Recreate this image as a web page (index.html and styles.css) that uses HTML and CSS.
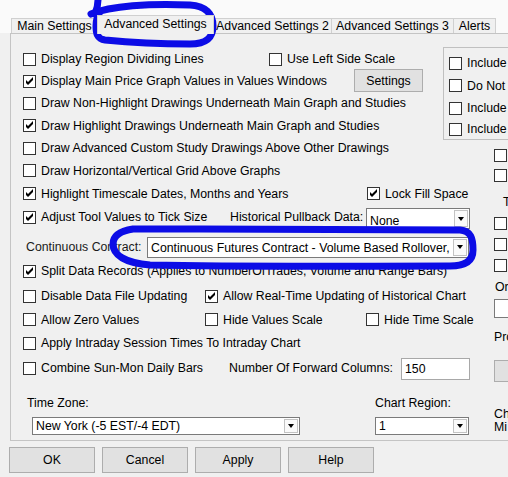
FILE: index.html
```html
<!DOCTYPE html>
<html lang="en">
<head>
    <meta charset="UTF-8">
    <title>Chart Settings</title>
    <link rel="stylesheet" href="styles.css">
</head>
<body>
    <div class="tabs">
        <div class="tab t-main">Main Settings</div>
        <div class="tab t-adv active">Advanced Settings</div>
        <div class="tab t-adv2">Advanced Settings 2</div>
        <div class="tab t-adv3">Advanced Settings 3</div>
        <div class="tab t-alerts">Alerts</div>
    </div>

    <div class="panel">
        <div class="left">
            <div class="top">
                <div class="top-rows">
                    <div class="row h22">
                        <label class="check lead-scale"><span class="box"></span>Display Region Dividing Lines</label>
                        <label class="check"><span class="box"></span>Use Left Side Scale</label>
                    </div>
                    <div class="row h22">
                        <label class="check lead-settings"><span class="box on"><svg viewBox="0 0 11 11"><polygon points="2,4 4,6 9,1 9,4 4,9 2,7"/></svg></span>Display Main Price Graph Values in Values Windows</label>
                        <button class="btn btn-settings">Settings</button>
                    </div>
                    <div class="row h22">
                        <label class="check"><span class="box"></span>Draw Non-Highlight Drawings Underneath Main Graph and Studies</label>
                    </div>
                    <div class="row h23">
                        <label class="check"><span class="box on"><svg viewBox="0 0 11 11"><polygon points="2,4 4,6 9,1 9,4 4,9 2,7"/></svg></span>Draw Highlight Drawings Underneath Main Graph and Studies</label>
                    </div>
                </div>
                <div class="group">
                    <label class="check g-row h22"><span class="box"></span>Include</label>
                    <label class="check g-row h23"><span class="box"></span>Do Not</label>
                    <label class="check g-row h22"><span class="box"></span>Include</label>
                    <label class="check g-row h20"><span class="box"></span>Include</label>
                </div>
            </div>

            <div class="row h22">
                <label class="check"><span class="box"></span>Draw Advanced Custom Study Drawings Above Other Drawings</label>
            </div>
            <div class="row h23">
                <label class="check"><span class="box"></span>Draw Horizontal/Vertical Grid Above Graphs</label>
            </div>
            <div class="row h23">
                <label class="check lead-lock"><span class="box on"><svg viewBox="0 0 11 11"><polygon points="2,4 4,6 9,1 9,4 4,9 2,7"/></svg></span>Highlight Timescale Dates, Months and Years</label>
                <label class="check"><span class="box on"><svg viewBox="0 0 11 11"><polygon points="2,4 4,6 9,1 9,4 4,9 2,7"/></svg></span>Lock Fill Space</label>
            </div>
            <div class="row h24">
                <label class="check lead-hist"><span class="box on"><svg viewBox="0 0 11 11"><polygon points="2,4 4,6 9,1 9,4 4,9 2,7"/></svg></span>Adjust Tool Values to Tick Size</label>
                <span class="label label-hist">Historical Pullback Data:</span>
                <div class="combo combo-hist"><span class="val">None</span><span class="arrow"></span></div>
            </div>
            <div class="row h24 gap-contract">
                <span class="label label-contract">Continuous Contract:</span>
                <div class="combo combo-contract"><span class="val">Continuous Futures Contract - Volume Based Rollover, Back Adjusted</span><span class="arrow"></span></div>
            </div>
            <div class="row h24">
                <label class="check"><span class="box on"><svg viewBox="0 0 11 11"><polygon points="2,4 4,6 9,1 9,4 4,9 2,7"/></svg></span>Split Data Records (Applies to NumberOfTrades, Volume and Range Bars)</label>
            </div>
            <div class="row h26">
                <label class="check lead-mid"><span class="box"></span>Disable Data File Updating</label>
                <label class="check"><span class="box on"><svg viewBox="0 0 11 11"><polygon points="2,4 4,6 9,1 9,4 4,9 2,7"/></svg></span>Allow Real-Time Updating of Historical Chart</label>
            </div>
            <div class="row h21">
                <label class="check lead-mid"><span class="box"></span>Allow Zero Values</label>
                <label class="check lead-values"><span class="box"></span>Hide Values Scale</label>
                <label class="check"><span class="box"></span>Hide Time Scale</label>
            </div>
            <div class="row h26">
                <label class="check"><span class="box"></span>Apply Intraday Session Times To Intraday Chart</label>
            </div>
            <div class="row h24">
                <label class="check lead-cols"><span class="box"></span>Combine Sun-Mon Daily Bars</label>
                <span class="label label-cols">Number Of Forward Columns:</span>
                <input class="edit edit-cols" type="text" value="150">
            </div>
            <div class="row h22 gap-zone">
                <span class="label label-zone">Time Zone:</span>
                <span class="label">Chart Region:</span>
            </div>
            <div class="row h18 gap-zone-combo">
                <div class="combo combo-zone"><span class="val">New York (-5 EST/-4 EDT)</span><span class="arrow"></span></div>
                <div class="combo combo-region"><span class="val">1</span><span class="arrow"></span></div>
            </div>
        </div>

        <div class="right">
            <div class="r-item r-first"><span class="box"></span></div>
            <div class="r-item"><span class="box"></span></div>
            <div class="r-item r-title">T</div>
            <div class="r-item r-near"><span class="box"></span></div>
            <div class="r-item r-near"><span class="box"></span></div>
            <div class="r-item r-near"><span class="box"></span></div>
            <div class="r-item r-or">Or</div>
            <div class="r-edit"></div>
            <div class="r-item r-pro">Pro</div>
            <div class="r-btn"></div>
            <div class="r-lines">Ch<br>Mi</div>
        </div>
    </div>

    <div class="buttons">
        <button class="btn btn-dlg">OK</button>
        <button class="btn btn-dlg">Cancel</button>
        <button class="btn btn-dlg">Apply</button>
        <button class="btn btn-dlg">Help</button>
    </div>

    <!-- pen marks drawn over the dialog -->
    <svg class="marks" width="508" height="477" viewBox="0 0 508 477">
        <g fill="none" stroke="#0c0ce6" stroke-width="7" stroke-linecap="round" stroke-linejoin="round">
            <path d="M98,0 C98,5 97,9 95,14"/>
            <path d="M91,14 C110,6 150,3 190,5 C206,6 213,14 213,26 C213,38 206,44 190,44 C160,44 125,42 105,40 C97,39 96,33 96,26 C96,20 97,16 100,12"/>
            <path d="M133,229 C120,231 113,236 113,244 C113,255 125,263 150,265 C250,267 350,266 450,266 C466,266 473,260 473,250 C473,238 471,231 460,230 C400,229 300,229 200,229 C170,229 150,229 133,229"/>
        </g>
    </svg>
</body>
</html>
```

FILE: styles.css
```css
body {
    margin: 0;
    width: 508px;
    height: 477px;
    overflow: hidden;
    position: relative;
    background: #f0f0f0;
    font-family: "Liberation Sans", Arial, sans-serif;
    font-size: 12.3px;
    color: #000;
}

/* tab strip */
.tabs {
    display: flex;
    align-items: flex-end;
    height: 33px;
    padding-left: 11px;
    background: #fafafa;
}
.tab {
    box-sizing: border-box;
    height: 15px;
    border: 1px solid #d0d0d0;
    border-bottom: none;
    background: #f0f0f0;
    text-align: center;
    line-height: 15px;
    white-space: nowrap;
    margin-left: -1px;
}
.t-main { width: 87px; margin-left: 0; }
.t-adv { width: 117px; }
.t-adv2 { width: 119px; }
.t-adv3 { width: 123px; }
.t-alerts { width: 43px; }
.tab.active {
    height: 19px;
    line-height: 16px;
    margin-bottom: -1px;
    position: relative;
    z-index: 1;
}

/* tab page */
.panel {
    box-sizing: border-box;
    display: flex;
    width: 560px;
    height: 408px;
    margin-left: 10px;
    padding: 14px 0 0 12px;
    border: 1px solid #c4c4c4;
    border-right: none;
}
.left { width: 455px; flex: none; }
.top { display: flex; }
.top-rows { width: 420px; flex: none; }

.row { display: flex; align-items: center; white-space: nowrap; }
.h18 { height: 18px; }
.h20 { height: 20px; }
.h21 { height: 21px; }
.h22 { height: 22px; }
.h23 { height: 23px; }
.h24 { height: 24px; }
.h26 { height: 26px; }
.gap-contract { margin-top: 6px; }
.gap-zone { margin-top: 12px; }
.gap-zone-combo { margin-top: 3px; }

.check { display: flex; align-items: center; white-space: nowrap; }
.box {
    box-sizing: border-box;
    width: 13px;
    height: 13px;
    flex: none;
    margin-right: 5px;
    border: 1px solid #333;
    background: #fff;
}
.box svg { display: block; width: 11px; height: 11px; }
.box polygon { fill: #000; }

.lead-scale { width: 246px; flex: none; }
.lead-settings { width: 331px; flex: none; }
.lead-lock { width: 344px; flex: none; }
.lead-hist { width: 207px; flex: none; }
.lead-mid { width: 182px; flex: none; }
.lead-values { width: 161px; flex: none; }
.lead-cols { width: 206px; flex: none; }

.label { white-space: nowrap; }
.label-hist { width: 136px; flex: none; }
.label-contract { width: 121px; flex: none; padding-left: 3px; color: #1a1a1a; }
.label-cols { width: 172px; flex: none; }
.label-zone { width: 348px; flex: none; padding-left: 4px; }

/* group box on the right */
.group {
    box-sizing: border-box;
    width: 120px;
    height: 93px;
    flex: none;
    margin-top: -1px;
    margin-bottom: -4px;
    padding: 4px 0 0 5px;
    border: 1px solid #c0c0c0;
    border-right: none;
}
.g-row { display: flex; }

/* drop-down lists */
.combo {
    box-sizing: border-box;
    display: flex;
    height: 21px;
    background: #fff;
    border: 1px solid #7a7a7a;
    flex: none;
}
.combo .val {
    flex: 1;
    overflow: hidden;
    white-space: nowrap;
    padding-left: 3px;
    line-height: 20px;
}
.combo .arrow {
    box-sizing: border-box;
    width: 14px;
    margin: 1px;
    border: 1px solid #c3c3c3;
    background: #fafafa;
    display: flex;
    align-items: center;
    justify-content: center;
}
.combo .arrow::after {
    content: "";
    border-left: 3.5px solid transparent;
    border-right: 3.5px solid transparent;
    border-top: 4px solid #000;
}
.combo-hist { width: 104px; align-self: flex-end; }
.combo-hist .val { line-height: 24px; }
.combo-contract { width: 322px; }
.combo-zone { width: 268px; height: 18px; margin-left: 9px; }
.combo-region { width: 94px; height: 18px; margin-left: 75px; }
.combo-zone .val, .combo-region .val { line-height: 17px; }

.edit {
    box-sizing: border-box;
    width: 69px;
    height: 22px;
    align-self: flex-end;
    border: 1px solid #a8a8a8;
    background: #fff;
    font: inherit;
    padding: 0 0 0 3px;
    margin: 0;
}

.btn {
    box-sizing: border-box;
    border: 1px solid #adadad;
    background: #e1e1e1;
    font: inherit;
    color: #000;
    padding: 0;
    margin: 0;
}
.btn-settings { width: 69px; height: 23px; align-self: flex-end; }

/* column cut off at the right edge */
.right { padding-left: 16px; width: 60px; flex: none; }
.r-item { display: flex; align-items: center; height: 20px; white-space: nowrap; }
.r-first { margin-top: 97px; }
.r-title { margin-top: 7px; padding-left: 9px; }
.r-near { margin-top: 1px; }
.r-or { margin-top: 2px; padding-left: 1px; }
.r-edit {
    box-sizing: border-box;
    height: 19px;
    margin-top: 2px;
    background: #fff;
    border: 1px solid #7a7a7a;
    border-right: none;
}
.r-pro { margin-top: 9px; }
.r-btn {
    box-sizing: border-box;
    height: 22px;
    margin-top: 13px;
    background: #e1e1e1;
    border: 1px solid #adadad;
    border-right: none;
}
.r-lines { margin-top: 26px; line-height: 13px; }

/* dialog buttons */
.buttons {
    display: flex;
    gap: 7px;
    margin-top: 6px;
    padding-left: 9px;
}
.btn-dlg { width: 86px; height: 26px; }

.marks {
    position: absolute;
    left: 0;
    top: 0;
    pointer-events: none;
}
```
